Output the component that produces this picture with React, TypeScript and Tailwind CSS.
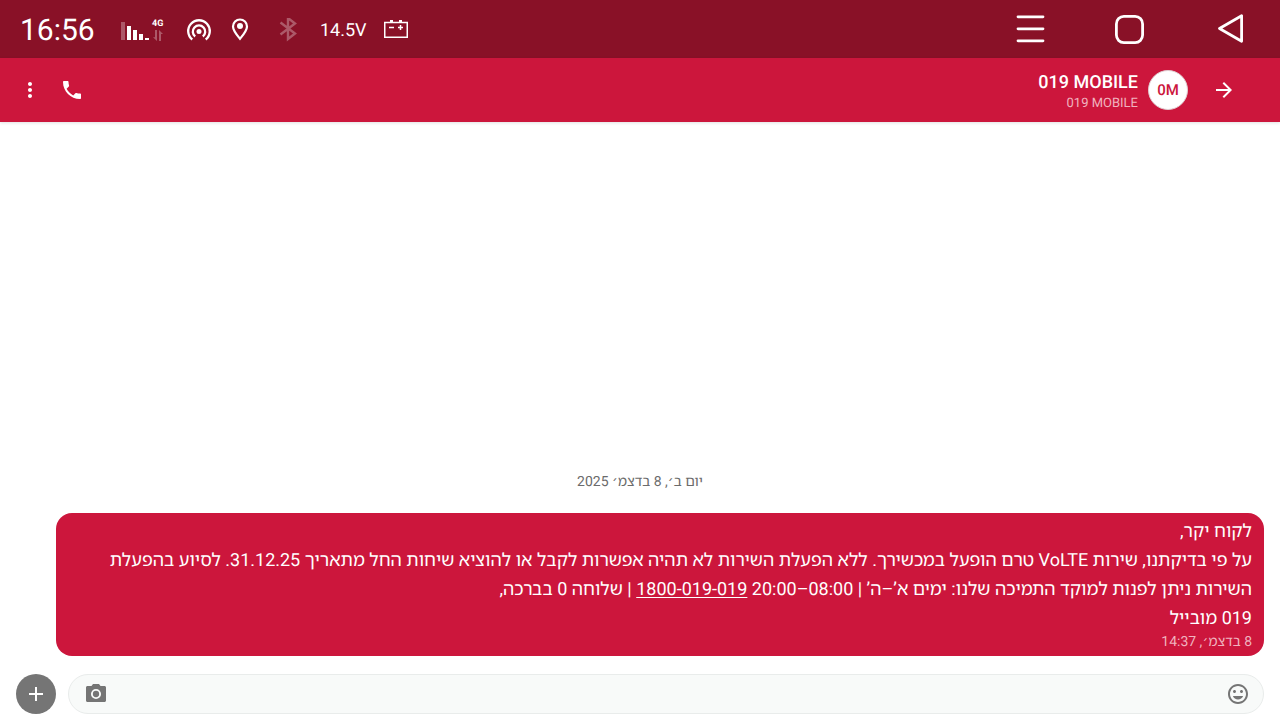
import { useState } from 'react';
import type { ReactNode } from 'react';

interface IconButtonProps {
  label: string;
  className?: string;
  children: ReactNode;
}

function IconButton({ label, className = '', children }: IconButtonProps) {
  return (
    <button type="button" aria-label={label} className={`flex shrink-0 items-center justify-center ${className}`}>
      {children}
    </button>
  );
}

function MaterialIcon({ path }: { path: string }) {
  return (
    <svg viewBox="0 0 24 24" className="h-6 w-6" fill="currentColor" aria-hidden="true">
      <path d={path} />
    </svg>
  );
}

const ICONS = {
  more: 'M12 8c1.1 0 2-.9 2-2s-.9-2-2-2-2 .9-2 2 .9 2 2 2zm0 2c-1.1 0-2 .9-2 2s.9 2 2 2 2-.9 2-2-.9-2-2-2zm0 6c-1.1 0-2 .9-2 2s.9 2 2 2 2-.9 2-2-.9-2-2-2z',
  phone:
    'M6.62 10.79c1.44 2.83 3.76 5.14 6.59 6.59l2.2-2.2c.27-.27.67-.36 1.02-.24 1.12.37 2.33.57 3.57.57.55 0 1 .45 1 1V20c0 .55-.45 1-1 1-9.39 0-17-7.61-17-17 0-.55.45-1 1-1h3.5c.55 0 1 .45 1 1 0 1.25.2 2.45.57 3.57.11.35.03.74-.25 1.02l-2.2 2.2z',
  forward: 'M12 4l-1.41 1.41L16.17 11H4v2h12.17l-5.58 5.59L12 20l8-8z',
  add: 'M19 13h-6v6h-2v-6H5v-2h6V5h2v6h6v2z',
  smile:
    'M11.99 2C6.47 2 2 6.48 2 12s4.47 10 9.99 10C17.52 22 22 17.52 22 12S17.52 2 11.99 2zM12 20c-4.42 0-8-3.58-8-8s3.58-8 8-8 8 3.58 8 8-3.58 8-8 8zm3.5-9c.83 0 1.5-.67 1.5-1.5S16.33 8 15.5 8 14 8.67 14 9.5s.67 1.5 1.5 1.5zm-7 0c.83 0 1.5-.67 1.5-1.5S9.33 8 8.5 8 7 8.67 7 9.5 7.67 11 8.5 11zm3.5 6.5c2.33 0 4.31-1.46 5.11-3.5H6.89c.8 2.04 2.78 3.5 5.11 3.5z',
};

function StatusBar() {
  return (
    <div dir="ltr" className="flex h-[58px] shrink-0 items-center justify-between bg-[#891127] pr-[35px] pl-5 text-white">
      <div className="flex items-center pt-0.5">
        <time className="w-[100px] pt-0.5 text-[30px] leading-9">16:56</time>

        {/* Signal strength */}
        <svg width="30" height="20" viewBox="0 0 30 20" fill="currentColor" className="mt-0.5" aria-hidden="true">
          <rect x="1" y="1" width="4" height="18" opacity=".3" />
          <rect x="7" y="5" width="4" height="14" />
          <rect x="13" y="9" width="4" height="10" />
          <rect x="19" y="13" width="4" height="6" />
          <rect x="25" y="17" width="4" height="2" />
        </svg>
        <div className="ml-0.5 flex w-3 flex-col gap-px">
          <span className="text-[9px] leading-[10px] font-bold">4G</span>
          <svg width="12" height="11" viewBox="0 0 12 11" fill="currentColor" opacity=".3" aria-hidden="true">
            <path d="M3 0h2v11L1 7.200h2zM7 11h2V4h2L7 0z" />
          </svg>
        </div>

        {/* Hotspot */}
        <svg className="ml-[22px]" width="26" height="24" viewBox="0 0 26 24" fill="none" stroke="currentColor" aria-hidden="true">
          <circle cx="13" cy="13.500" r="2.500" fill="currentColor" stroke="none" />
          <path d="M9.200 18.500a6.200 6.200 0 1 1 7.600 0" strokeWidth="2.300" />
          <path d="M6.300 21.500a10.800 10.800 0 1 1 13.400 0" strokeWidth="2.300" />
        </svg>

        {/* Location */}
        <svg className="ml-[19px]" width="18" height="24" viewBox="0 0 18 24" fill="none" stroke="currentColor" aria-hidden="true">
          <path d="M9 20.800C6.300 17.500 2 12.700 2 8.500a7 7 0 0 1 14 0C16 12.700 11.700 17.500 9 20.800z" strokeWidth="2.200" />
          <circle cx="9" cy="8" r="3" fill="currentColor" stroke="none" />
        </svg>

        {/* Bluetooth */}
        <svg className="ml-[30px]" width="20" height="24" viewBox="0 0 20 24" fill="none" stroke="currentColor" opacity=".3" aria-hidden="true">
          <path d="M1.500 4.500l14.500 11-7 5.500V0l7 5.500L1.500 16.500" strokeWidth="2.400" />
        </svg>

        <span className="ml-[21px] pt-0.5 text-[18px] leading-6">14.5V</span>

        {/* Car battery */}
        <svg className="ml-[17px]" width="24" height="20" viewBox="0 0 24 20" fill="none" stroke="currentColor" aria-hidden="true">
          <rect x=".75" y="2.500" width="22.500" height="14.750" strokeWidth="1.500" />
          <path d="M6 1h3M15 1h3" strokeWidth="2" />
          <path d="M5 7.500h5M14 7.500h5M16.500 5v5" strokeWidth="1.500" />
        </svg>
      </div>

      <div className="flex items-center gap-[70px]">
        <IconButton label="Menu">
          <svg width="30" height="30" viewBox="0 0 30 30" fill="none" stroke="currentColor" strokeWidth="2.800" strokeLinecap="round" aria-hidden="true">
            <path d="M3 2.800h25M3 14.800h25M3 26.800h25" />
          </svg>
        </IconButton>
        <IconButton label="Home">
          <svg width="30" height="30" viewBox="0 0 30 30" fill="none" stroke="currentColor" strokeWidth="2.800" aria-hidden="true">
            <rect x="1.400" y="2.400" width="26.200" height="26.200" rx="7.500" />
          </svg>
        </IconButton>
        <IconButton label="Back">
          <svg width="30" height="30" viewBox="0 0 30 30" fill="none" stroke="currentColor" strokeWidth="2.800" strokeLinejoin="round" aria-hidden="true">
            <path d="M26.600 1.800v25.500L4.500 14.500z" />
          </svg>
        </IconButton>
      </div>
    </div>
  );
}

function ChatHeader() {
  return (
    <header className="z-10 flex h-16 shrink-0 items-center bg-[#cc163c] ps-11 pe-[18px] text-white shadow-[0_1px_3px_rgba(0,0,0,0.12)]">
      <IconButton label="חזרה">
        <MaterialIcon path={ICONS.forward} />
      </IconButton>
      <div className="ms-6 flex h-10 w-10 items-center justify-center rounded-full border border-[#e0cdd1] bg-white text-[15px] font-medium text-[#cc163c]">
        0M
      </div>
      <div className="ms-2.5 flex-1 pt-0.5">
        <h1 className="text-[18px] leading-6 font-medium">
          <bdi>019 MOBILE</bdi>
        </h1>
        <p className="text-[13px] leading-[17px] text-[#f0b3bf]">
          <bdi>019 MOBILE</bdi>
        </p>
      </div>
      <div className="flex gap-[18px]">
        <IconButton label="התקשר">
          <MaterialIcon path={ICONS.phone} />
        </IconButton>
        <IconButton label="אפשרויות נוספות">
          <MaterialIcon path={ICONS.more} />
        </IconButton>
      </div>
    </header>
  );
}

// Abbreviation mark in the wider DejaVu cut, the default one is hard to see at small sizes
function Geresh() {
  return <span className="font-['DejaVu_Sans',sans-serif]">׳</span>;
}

function Message() {
  return (
    <article className="ms-4 me-14 rounded-2xl bg-[#cc163c] px-3 pt-1 pb-[5px] text-white">
      <div className="text-[18px] leading-[29px]">
        <p>לקוח יקר,</p>
        <p>
          על פי בדיקתנו, שירות VoLTE טרם הופעל במכשירך. ללא הפעלת השירות לא תהיה אפשרות לקבל או להוציא שיחות החל מתאריך
          31.12.25. לסיוע בהפעלת השירות ניתן לפנות למוקד התמיכה שלנו: ימים א’–ה’ | 08:00–20:00{' '}
          <a href="tel:1800019019" className="underline decoration-1 underline-offset-2">
            1800-019-019
          </a>{' '}
          | שלוחה 0 בברכה,
        </p>
        <p>019 מובייל</p>
      </div>
      <time className="block text-[14px] leading-[18px] text-[#f0b3bf]">
        8 בדצמ
        <Geresh />, 14:37
      </time>
    </article>
  );
}

function Composer() {
  const [text, setText] = useState('');

  return (
    <form className="flex items-center gap-3 px-4 pt-[18px] pb-1.5" onSubmit={(e) => e.preventDefault()}>
      <div className="flex h-10 flex-1 items-center rounded-full border border-[#e9eceb] bg-[#f8faf9] ps-[13px] pe-[15px] text-[#757575]">
        <IconButton label="אמוג׳י">
          <MaterialIcon path={ICONS.smile} />
        </IconButton>
        <input
          type="text"
          aria-label="הודעת טקסט"
          value={text}
          onChange={(e) => setText(e.target.value)}
          className="mx-2 min-w-0 flex-1 bg-transparent text-[18px] text-gray-900 outline-none"
        />
        <IconButton label="מצלמה">
          <svg viewBox="0 0 24 24" className="h-6 w-6" aria-hidden="true">
            <path
              d="M9 2L7.500 4H3.500C2.700 4 2 4.700 2 5.500v13c0 .8.7 1.500 1.500 1.500h17c.8 0 1.500-.7 1.500-1.500v-13c0-.8-.7-1.500-1.500-1.500h-4L15 2H9z"
              fill="currentColor"
            />
            <circle cx="12" cy="12" r="4.100" fill="none" stroke="#f8faf9" strokeWidth="1.900" />
          </svg>
        </IconButton>
      </div>
      <IconButton label="צרף" className="h-10 w-10 rounded-full bg-[#757575] text-white">
        <MaterialIcon path={ICONS.add} />
      </IconButton>
    </form>
  );
}

export default function App() {
  return (
    <div
      dir="rtl"
      lang="he"
      className="flex min-h-screen flex-col bg-white font-[Roboto,'Noto_Sans_Hebrew','Noto_Sans','Open_Sans',sans-serif] [text-rendering:geometricPrecision]"
    >
      <StatusBar />
      <ChatHeader />
      <main className="flex flex-1 flex-col justify-end">
        <div className="pb-[21px] text-center text-[14px] leading-5 text-[#6b6b6b]">
          יום ב<Geresh />, 8 בדצמ
          <Geresh /> 2025
        </div>
        <Message />
      </main>
      <Composer />
    </div>
  );
}
